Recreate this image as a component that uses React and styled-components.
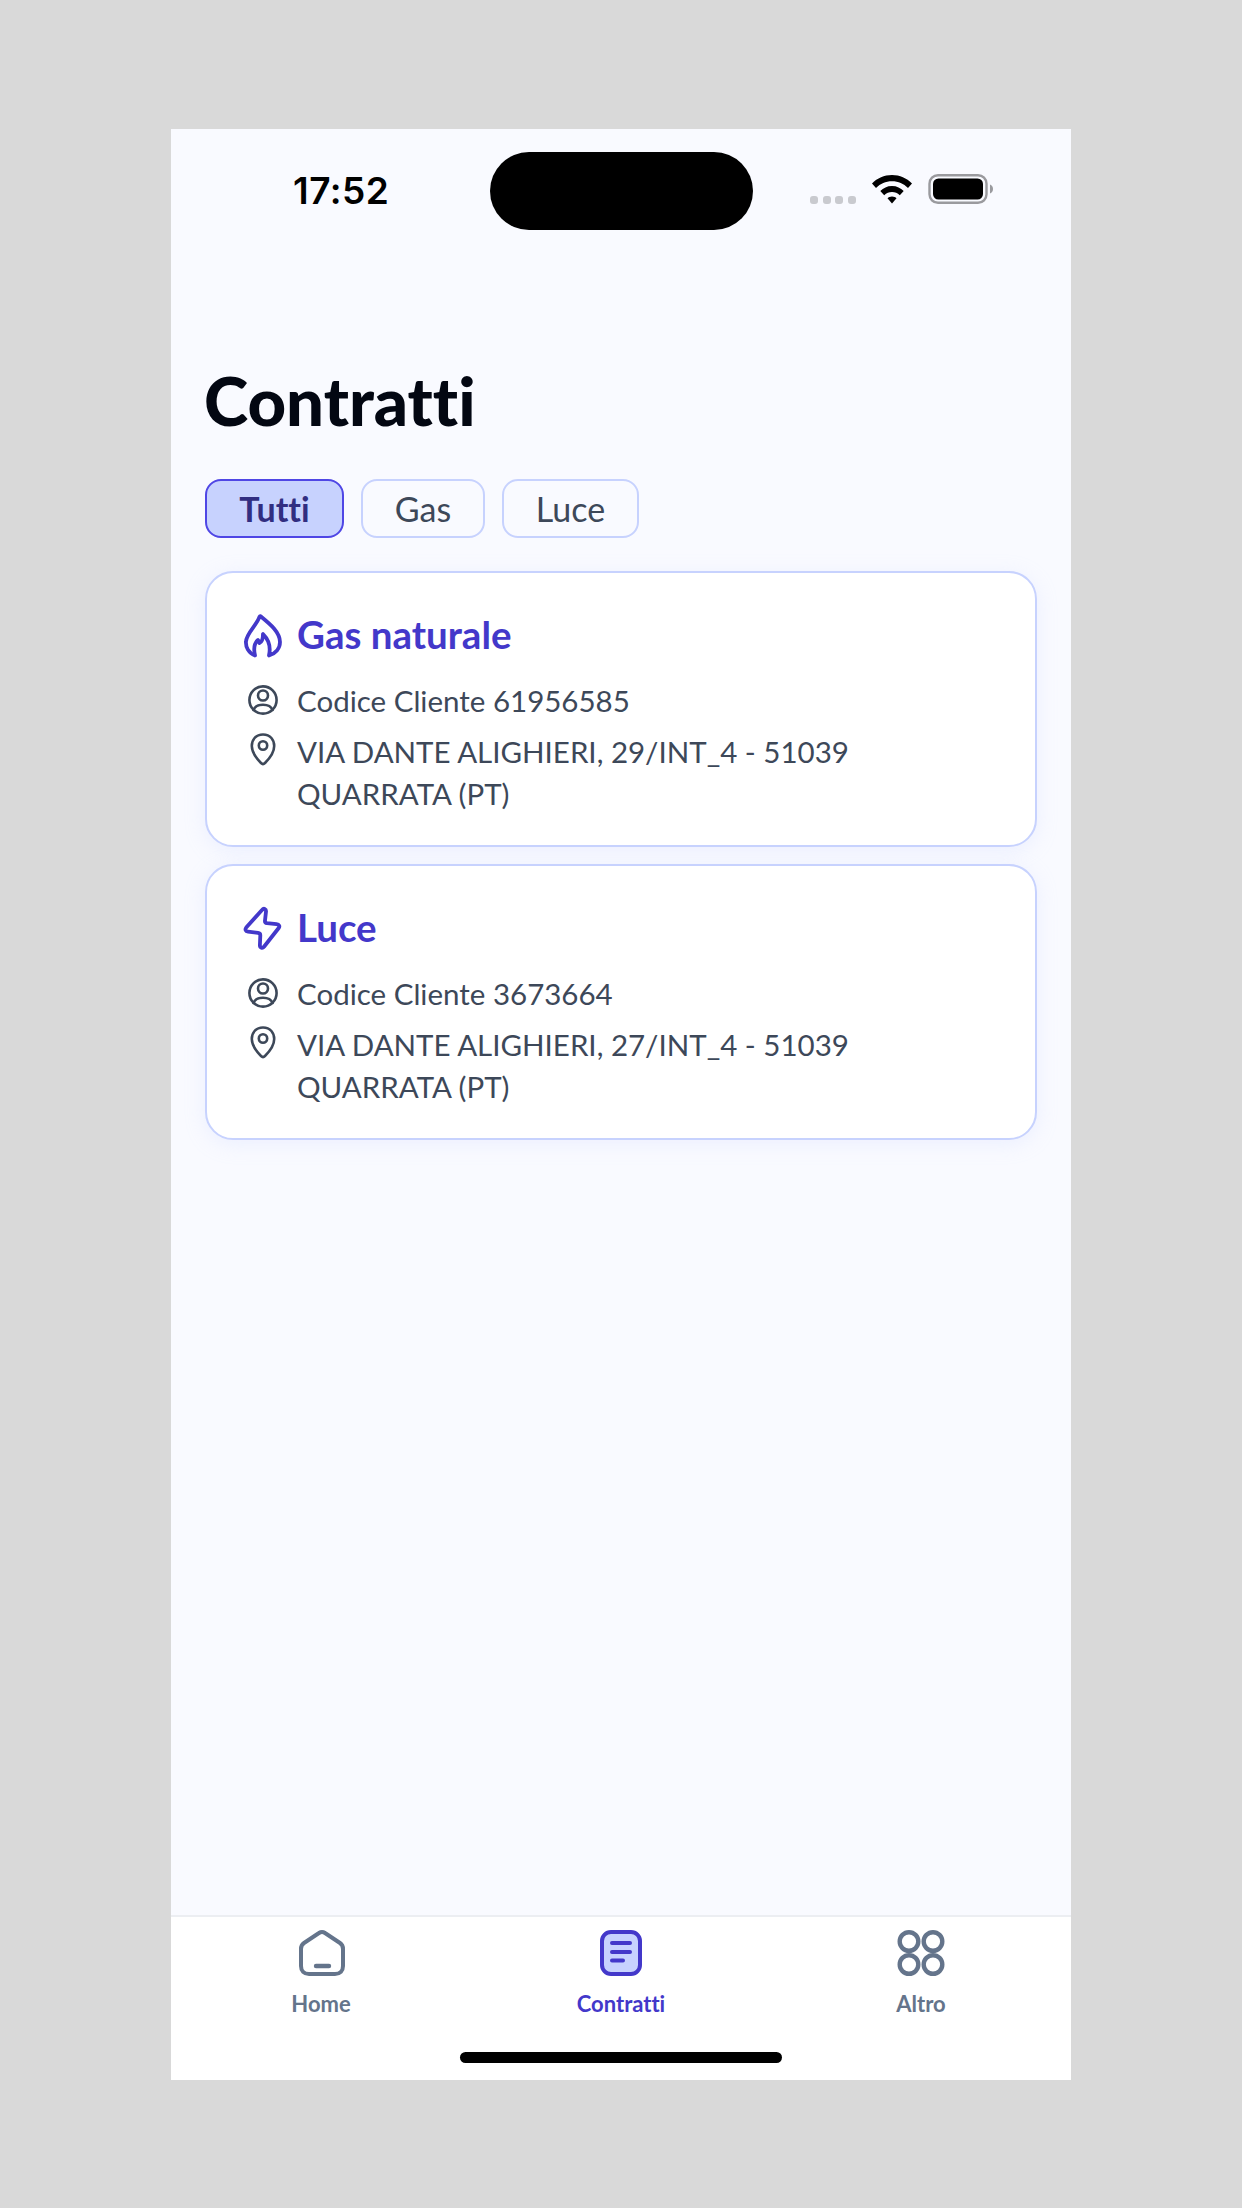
import React from "react";
import styled, { createGlobalStyle } from "styled-components";

const GlobalStyle = createGlobalStyle`
  html, body { margin: 0; padding: 0; background: #d9d9d9; }
  body { font-family: "Lato", "Noto Sans", sans-serif; font-variant-ligatures: none; }
  * { box-sizing: border-box; }
`;

const Page = styled.div`
  width: 1242px;
  height: 2208px;
  padding-top: 129px;
  background: #d9d9d9;
`;

const Phone = styled.div`
  width: 900px;
  height: 1951px;
  margin-left: 171px;
  display: flex;
  flex-direction: column;
  background: #f9faff;
  overflow: hidden;
`;

const StatusBar = styled.div`
  display: flex;
  align-items: center;
  height: 78px;
  margin-top: 23px;
`;

const Time = styled.div`
  width: 319px;
  padding-left: 122px;
  margin-top: -2px;
  font-family: "Inter", sans-serif;
  font-size: 37px;
  font-weight: 600;
  letter-spacing: 0.5px;
  color: #000;
`;

const Island = styled.div`
  width: 263px;
  height: 78px;
  border-radius: 39px;
  background: #000;
`;

const StatusIcons = styled.div`
  display: flex;
  align-items: center;
  padding-left: 57px;
  margin-bottom: 5px;
`;

const Dots = styled.div`
  display: flex;
  gap: 4.6px;
  margin: 23px 15px 0 0;
`;

const Dot = styled.span`
  width: 8px;
  height: 8px;
  border-radius: 3px;
  background: #c9cacf;
`;

const Content = styled.main`
  flex: 1;
  padding: 128px 34px 0;
`;

const Title = styled.h1`
  margin: 0 0 0 -1px;
  font-size: 67px;
  line-height: 84px;
  font-weight: 900;
  color: #030712;
`;

const Filters = styled.div`
  display: flex;
  gap: 17px;
  margin-top: 37px;
`;

const Chip = styled.div`
  height: 59px;
  width: ${(p) => p.$width}px;
  display: flex;
  align-items: center;
  justify-content: center;
  border-radius: 16px;
  border: 2px solid ${(p) => (p.$active ? "#4f46e5" : "#c7d2fe")};
  background: ${(p) => (p.$active ? "#c7d2fe" : "transparent")};
  color: ${(p) => (p.$active ? "#312e81" : "#3d4859")};
  font-size: 34px;
  font-weight: ${(p) => (p.$active ? 700 : 400)};
`;

const Cards = styled.div`
  display: flex;
  flex-direction: column;
  gap: 17px;
  margin-top: 33px;
`;

const Card = styled.section`
  height: 276px;
  padding: 39px 36px 0 32px;
  border-radius: 28px;
  border: 2px solid #c7d2fe;
  background: #fff;
  box-shadow: 0 4px 20px rgba(199, 210, 254, 0.25);
`;

const CardHeader = styled.div`
  display: flex;
  align-items: center;
  gap: 10px;
  height: 48px;
  margin-bottom: 20px;
`;

const CardTitle = styled.h2`
  margin: -4px 0 0;
  font-size: 38.5px;
  font-weight: 700;
  color: #4338ca;
`;

const InfoRow = styled.div`
  display: flex;
  align-items: flex-start;
  gap: 18px;
  padding-left: 8px;
  margin-top: ${(p) => (p.$spaced ? "9px" : "0")};
`;

const InfoIcon = styled.svg`
  flex: none;
  width: 32px;
  height: 42px;
  color: #3d4859;
`;

const InfoText = styled.div`
  font-size: 29.5px;
  line-height: 42px;
  color: #3d4859;
`;

const TabBar = styled.nav`
  height: 165px;
  border-top: 2px solid #eceef2;
  background: #fff;
  display: flex;
  flex-direction: column;
`;

const Tabs = styled.div`
  display: grid;
  grid-template-columns: repeat(3, 300px);
  padding-top: 8px;
`;

const Tab = styled.div`
  display: flex;
  flex-direction: column;
  align-items: center;
  color: ${(p) => (p.$active ? "#4338ca" : "#64748b")};
  font-size: 22px;
  font-weight: 700;
  line-height: 30px;
`;

const TabIcon = styled.svg`
  width: 56px;
  height: 56px;
  margin-bottom: 8px;
`;

const HomeIndicator = styled.div`
  width: 322px;
  height: 11px;
  margin: 33px auto 0;
  border-radius: 5.5px;
  background: #000;
`;

const Flame = () => (
  <svg width="48" height="48" viewBox="0 0 48 48" fill="none" stroke="#4338ca" strokeWidth="3.8" strokeLinecap="round" strokeLinejoin="round">
    <path d="M16 43.5C9.5 41 6.5 35 7 29.5C7.5 21 18 13 20.5 4.8C21 3.6 21.6 4 22.5 5C31 12 41 20 41 30C41 36.5 36.5 41.5 30 43.5C31.5 37 31 29 24 22C24 26 23 30 20.5 31C20 29.5 19.5 28.5 19 28C15.5 31 14.5 37 16 43.5Z" />
  </svg>
);

const Bolt = () => (
  <svg width="48" height="48" viewBox="0 0 48 48" fill="none" stroke="#4338ca" strokeWidth="3.8" strokeLinecap="round" strokeLinejoin="round">
    <path d="M23 5C24.8 2.8 27.3 3.8 27 6.5L26 15.5C25.8 17 26.7 18 28 18.2L37.5 19.2C40.3 19.5 41 21.3 39.7 23L25.2 41.5C23.4 43.7 20.8 42.8 20.9 40L21.3 30.5C21.4 29 20.5 28 19 27.8L9 26.6C6.6 26.3 5.8 24.4 7.2 22.6Z" />
  </svg>
);

const PersonIcon = () => (
  <InfoIcon viewBox="0 0 32 42" fill="none" stroke="currentColor" strokeWidth="2.6" strokeLinecap="round">
    <circle cx="16" cy="20" r="13.6" />
    <circle cx="16" cy="15.5" r="5" />
    <path d="M6.5 30C8 25.8 11.5 24.8 16 24.8C20.5 24.8 24 25.8 25.5 30" />
  </InfoIcon>
);

const PinIcon = () => (
  <InfoIcon viewBox="0 0 32 42" fill="none" stroke="currentColor" strokeWidth="2.6" strokeLinejoin="round">
    <path d="M16 3.5C8.5 3.5 4.8 9 4.8 15C4.8 21.5 10.5 28.5 14 32C15.2 33.2 16.8 33.2 18 32C21.5 28.5 27.2 21.5 27.2 15C27.2 9 23.5 3.5 16 3.5Z" />
    <circle cx="16" cy="14.5" r="4.2" />
  </InfoIcon>
);

const HomeIcon = () => (
  <TabIcon viewBox="0 0 56 56" fill="none" stroke="currentColor" strokeWidth="4" strokeLinecap="round" strokeLinejoin="round">
    <g transform="translate(1 0)">
      <path d="M25 8C27 6.6 29 6.6 31 8L46 18C48 19.4 49 21 49 24V41C49 46 46 49 41 49H15C10 49 7 46 7 41V24C7 21 8 19.4 10 18Z" />
      <path d="M22 41H35" strokeWidth="4.4" />
    </g>
  </TabIcon>
);

const ContractIcon = () => (
  <TabIcon viewBox="0 0 56 56" fill="#c7d2fe" stroke="currentColor" strokeWidth="4" strokeLinecap="round">
    <rect x="9" y="7" width="38" height="42" rx="9" />
    <path d="M19 18H37M19 27H37M19 35.5H30" fill="none" />
  </TabIcon>
);

const GridIcon = () => (
  <TabIcon viewBox="0 0 56 56" fill="none" stroke="currentColor" strokeWidth="4.4">
    <circle cx="16" cy="16.5" r="9.3" />
    <circle cx="40" cy="16.5" r="9.3" />
    <circle cx="16" cy="39.5" r="9.3" />
    <circle cx="40" cy="39.5" r="9.3" />
  </TabIcon>
);

const Wifi = () => (
  <svg width="42" height="30" viewBox="0 0 42 30" style={{ marginRight: 15 }}>
    <path d="M21 1C13 1 6.5 4 1 9.5L5 14C9.5 9.5 14.5 7.2 21 7.2C27.5 7.2 32.5 9.5 37 14L41 9.5C35.5 4 29 1 21 1Z" />
    <path d="M21 12C16 12 12.5 14 9.3 17L13.2 21.2C15.5 19.2 18 18 21 18C24 18 26.5 19.2 28.8 21.2L32.7 17C29.5 14 26 12 21 12Z" />
    <path d="M21 22.5C19 22.5 17.5 23.3 16.5 24.2L21 29.5L25.5 24.2C24.5 23.3 23 22.5 21 22.5Z" />
  </svg>
);

const Battery = () => (
  <svg width="66" height="30" viewBox="0 0 66 30">
    <rect x="1.5" y="1.2" width="57" height="27.6" rx="8.5" fill="none" stroke="#9a9a9e" strokeWidth="2.4" />
    <rect x="5" y="4.5" width="50" height="21" rx="5.5" fill="#000" />
    <path d="M62 10.5C64 11 65 13 65 15C65 17 64 19 62 19.5Z" fill="#9a9a9e" />
  </svg>
);

const contracts = [
  { id: 1, name: "Gas naturale", icon: <Flame />, code: "61956585", street: "VIA DANTE ALIGHIERI, 29/INT_4 - 51039" },
  { id: 2, name: "Luce", icon: <Bolt />, code: "3673664", street: "VIA DANTE ALIGHIERI, 27/INT_4 - 51039" },
];

const App = () => {
  return (
    <Page>
      <GlobalStyle />
      <Phone>
        <StatusBar>
          <Time>17:52</Time>
          <Island />
          <StatusIcons>
            <Dots>
              <Dot />
              <Dot />
              <Dot />
              <Dot />
            </Dots>
            <Wifi />
            <Battery />
          </StatusIcons>
        </StatusBar>

        <Content>
          <Title>Contratti</Title>
          <Filters>
            <Chip $active $width={139}>Tutti</Chip>
            <Chip $width={124}>Gas</Chip>
            <Chip $width={137}>Luce</Chip>
          </Filters>
          <Cards>
            {contracts.map((contract) => {
              return (
                <Card key={contract.id}>
                  <CardHeader>
                    {contract.icon}
                    <CardTitle>{contract.name}</CardTitle>
                  </CardHeader>
                  <InfoRow>
                    <PersonIcon />
                    <InfoText>Codice Cliente {contract.code}</InfoText>
                  </InfoRow>
                  <InfoRow $spaced>
                    <PinIcon />
                    <InfoText>
                      {contract.street}
                      <br />
                      QUARRATA (PT)
                    </InfoText>
                  </InfoRow>
                </Card>
              );
            })}
          </Cards>
        </Content>

        <TabBar>
          <Tabs>
            <Tab>
              <HomeIcon />
              Home
            </Tab>
            <Tab $active>
              <ContractIcon />
              Contratti
            </Tab>
            <Tab>
              <GridIcon />
              Altro
            </Tab>
          </Tabs>
          <HomeIndicator />
        </TabBar>
      </Phone>
    </Page>
  );
};

export default App;
